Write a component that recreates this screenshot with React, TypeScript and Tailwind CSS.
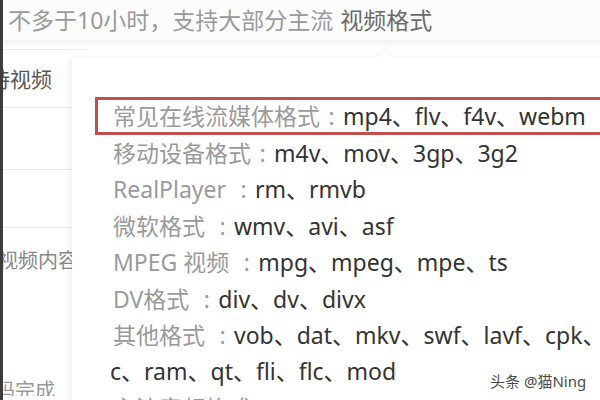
import React from "react";

const font = { fontFamily: '"Noto Sans", "Noto Sans CJK SC", sans-serif' };

type Row = { label: string; value: string };

const rows: Row[] = [
  { label: "移动设备格式", value: "m4v、mov、3gp、3g2" },
  { label: "RealPlayer\u00a0", value: "rm、rmvb" },
  { label: "微软格式\u00a0", value: "wmv、avi、asf" },
  { label: "MPEG 视频\u00a0", value: "mpg、mpeg、mpe、ts" },
  { label: "DV格式\u00a0", value: "div、dv、divx" },
  { label: "其他格式\u00a0", value: "vob、dat、mkv、swf、lavf、cpk、" },
  { label: "", value: "c、ram、qt、fli、flc、mod" },
  { label: "主流音频格式", value: "mp3、wma、ape" },
];

function Colon() {
  return <span className="inline-block w-[1em] text-center text-[#9a9a9a]">:</span>;
}

export default function App() {
  return (
    <div
      className="relative flex h-[400px] w-[600px] overflow-hidden bg-white"
      style={font}
    >
      <div className="z-10 h-full w-[3px] shrink-0 bg-[#3c3c3c]" />
      <div className="flex min-w-0 flex-1 flex-col">
        <div className="flex h-[40px] items-center whitespace-nowrap bg-[#fcfcfc] pl-[5px] text-[23px] text-[#9a9a9a]">
          <span>不多于10小时，支持大部分主流</span>
          <span className="ml-[7px] text-[#6b6b6b]">视频格式</span>
        </div>
        <div className="h-[9px] bg-gradient-to-b from-[#f3f3f3] to-white" />
        <div className="flex w-[86px] flex-col">
          <div className="h-[3px] border-t border-[#ececec]" />
          <div className="flex h-[56px] items-center overflow-hidden whitespace-nowrap border-b border-[#ececec] text-[21px] text-[#555]">
            <span className="-ml-[14px] shrink-0">持视频</span>
          </div>
          <div className="h-[62px] border-b border-[#ececec]" />
          <div className="h-[58px] border-b border-[#ececec]" />
          <div className="flex h-[66px] items-center overflow-hidden whitespace-nowrap text-[20px] text-[#888]">
            <span className="-ml-[5px] shrink-0">视频内容</span>
          </div>
          <div className="h-[72px]" />
          <div className="flex h-[30px] items-end overflow-hidden whitespace-nowrap text-[20px] text-[#999]">
            <span className="-ml-[8px] shrink-0 translate-y-[10px]">码完成</span>
          </div>
        </div>
      </div>

      {/* popover */}
      <div className="absolute left-[72px] top-[58px] h-[380px] w-[560px] bg-white shadow-[-3px_0_6px_rgba(0,0,0,0.06)]">
        <div className="absolute -top-[6px] left-[307px] h-[12px] w-[12px] rotate-45 bg-white shadow-[-1px_-1px_2px_rgba(0,0,0,0.05)]" />
        <div className="relative flex flex-col whitespace-nowrap pt-[39px] text-[23px]">
          <div className="ml-[23px] flex h-[38px] items-center border-[3px] border-r-0 border-[#c0504d] pl-[15px]">
            <span className="text-[#9a9a9a]">常见在线流媒体格式</span>
            <Colon />
            <span className="text-[#333]">mp4、flv、f4v、webm</span>
          </div>
          {rows.map((r, i) => (
            <div
              key={i}
              className={`flex h-[36.4px] items-center ${r.label ? "pl-[41px]" : "pl-[38px]"}`}
            >
              {r.label && <span className="text-[#9a9a9a]">{r.label}</span>}
              {r.label && <Colon />}
              <span className="text-[#333]">{r.value}</span>
            </div>
          ))}
        </div>
      </div>

      <div className="absolute left-[490px] top-[370px] whitespace-nowrap text-[15px] text-[#4a4a4a] [text-shadow:0_0_2px_#fff]">
        头条 @猫Ning
      </div>
    </div>
  );
}
